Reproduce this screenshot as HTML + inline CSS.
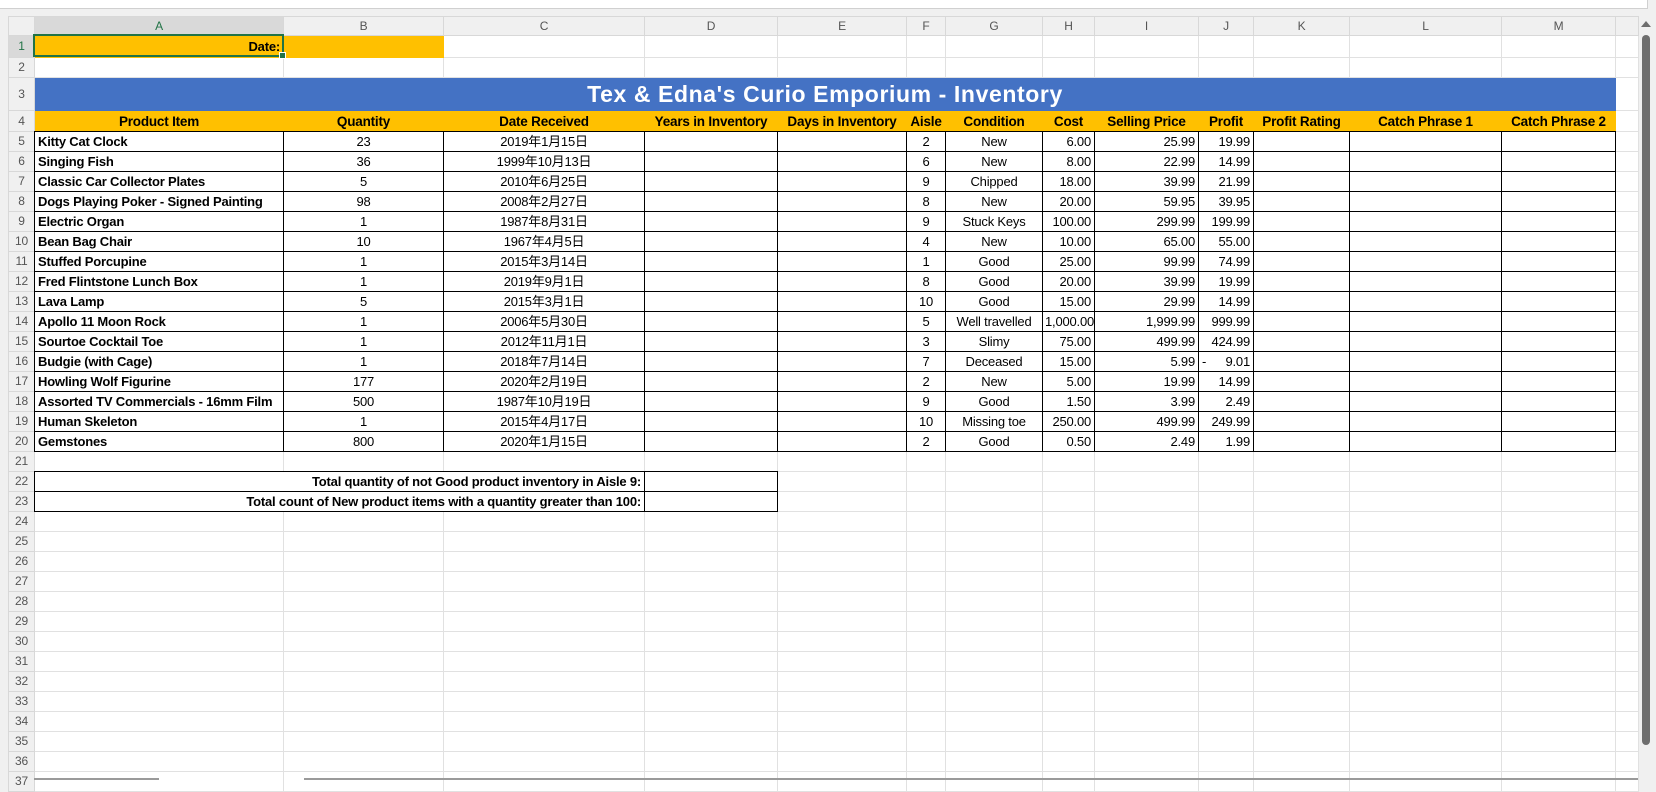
<!DOCTYPE html>
<html><head><meta charset="utf-8"><style>
body{margin:0;width:1656px;height:780px;overflow:hidden;background:#f0f0f0;font-family:"Liberation Sans","Noto Sans CJK JP",sans-serif;position:relative}
#top{position:absolute;left:0;top:0;width:1647px;height:8px;background:#fff;border-bottom:1px solid #d0d0d0;border-right:1px solid #d0d0d0}
table{position:absolute;left:8px;top:16px;border-collapse:collapse;table-layout:fixed;width:1630px;background:#fff}
td{border:1px solid #e1e1e1;padding:0 3px;height:19px;font-size:13px;white-space:nowrap;overflow:hidden;line-height:17px;letter-spacing:-0.2px;color:#000}
tr.ch td{background:#f0f0f0;color:#555;text-align:center;font-size:12px;border-color:#d8d8d8;height:18px}
td.rh{background:#f0f0f0;color:#555;text-align:center;font-size:12px;padding:0;border-color:#d8d8d8}
.k{border:1px double #000}
.c{text-align:center}.r{text-align:right}.bd{font-weight:bold}
.g{background:#ffc000}
.hd td.x{background:#ffc000;font-weight:bold;text-align:center;border-color:#ffc000;border-bottom:1px double #000;font-size:13.5px}
.t{background:#4472c4;color:#fff;font-weight:bold;font-size:23px;text-align:center;border:1px solid #4472c4;letter-spacing:0.6px}
#sel{position:absolute;left:33px;top:34px;width:247px;height:19px;border:2px solid #217346}
#hnd{position:absolute;left:279px;top:52px;width:5px;height:5px;background:#217346;border:1px solid #fff}
#vs{position:absolute;left:1642px;top:35px;width:8px;height:710px;background:#6e6e6e;border-radius:4px}
#ua{position:absolute;left:1641px;top:21px;width:0;height:0;border-left:5px solid transparent;border-right:5px solid transparent;border-bottom:6px solid #6e6e6e}
#hs1{position:absolute;left:34px;top:778px;width:125px;height:2px;background:#9a9a9a}
#hs2{position:absolute;left:304px;top:778px;width:1334px;height:2px;background:#9a9a9a}
</style></head><body>
<div id="top"></div>
<table>
<colgroup><col style="width:26px"><col style="width:249px"><col style="width:160px"><col style="width:201px"><col style="width:133px"><col style="width:129px"><col style="width:39px"><col style="width:97px"><col style="width:52px"><col style="width:104px"><col style="width:55px"><col style="width:96px"><col style="width:152px"><col style="width:114px"><col style="width:23px"></colgroup>
<tr class="ch"><td></td><td style="background:#d9d9d9;color:#217346">A</td><td>B</td><td>C</td><td>D</td><td>E</td><td>F</td><td>G</td><td>H</td><td>I</td><td>J</td><td>K</td><td>L</td><td>M</td><td></td></tr>
<tr style="height:22px"><td class="rh" style="background:#d9d9d9;color:#217346">1</td><td class="g r bd" style="border-color:#ffc000">Date:</td><td class="g" style="border-color:#ffc000"></td><td></td><td></td><td></td><td></td><td></td><td></td><td></td><td></td><td></td><td></td><td></td><td></td></tr>
<tr><td class="rh">2</td><td></td><td></td><td></td><td></td><td></td><td></td><td></td><td></td><td></td><td></td><td></td><td></td><td></td><td></td></tr>
<tr style="height:33px"><td class="rh">3</td><td class="t" colspan="13">Tex &amp; Edna's Curio Emporium - Inventory</td><td></td></tr>
<tr class="hd" style="height:21px"><td class="rh">4</td><td class="x">Product Item</td><td class="x">Quantity</td><td class="x">Date Received</td><td class="x">Years in Inventory</td><td class="x">Days in Inventory</td><td class="x">Aisle</td><td class="x">Condition</td><td class="x r">Cost</td><td class="x">Selling Price</td><td class="x">Profit</td><td class="x">Profit Rating</td><td class="x">Catch Phrase 1</td><td class="x">Catch Phrase 2</td><td></td></tr>
<tr><td class="rh">5</td><td class="k bd">Kitty Cat Clock</td><td class="k c">23</td><td class="k c">2019年1月15日</td><td class="k"></td><td class="k"></td><td class="k c">2</td><td class="k c">New</td><td class="k r">6.00</td><td class="k r">25.99</td><td class="k r">19.99</td><td class="k"></td><td class="k"></td><td class="k"></td><td></td></tr>
<tr><td class="rh">6</td><td class="k bd">Singing Fish</td><td class="k c">36</td><td class="k c">1999年10月13日</td><td class="k"></td><td class="k"></td><td class="k c">6</td><td class="k c">New</td><td class="k r">8.00</td><td class="k r">22.99</td><td class="k r">14.99</td><td class="k"></td><td class="k"></td><td class="k"></td><td></td></tr>
<tr><td class="rh">7</td><td class="k bd">Classic Car Collector Plates</td><td class="k c">5</td><td class="k c">2010年6月25日</td><td class="k"></td><td class="k"></td><td class="k c">9</td><td class="k c">Chipped</td><td class="k r">18.00</td><td class="k r">39.99</td><td class="k r">21.99</td><td class="k"></td><td class="k"></td><td class="k"></td><td></td></tr>
<tr><td class="rh">8</td><td class="k bd">Dogs Playing Poker - Signed Painting</td><td class="k c">98</td><td class="k c">2008年2月27日</td><td class="k"></td><td class="k"></td><td class="k c">8</td><td class="k c">New</td><td class="k r">20.00</td><td class="k r">59.95</td><td class="k r">39.95</td><td class="k"></td><td class="k"></td><td class="k"></td><td></td></tr>
<tr><td class="rh">9</td><td class="k bd">Electric Organ</td><td class="k c">1</td><td class="k c">1987年8月31日</td><td class="k"></td><td class="k"></td><td class="k c">9</td><td class="k c">Stuck Keys</td><td class="k r">100.00</td><td class="k r">299.99</td><td class="k r">199.99</td><td class="k"></td><td class="k"></td><td class="k"></td><td></td></tr>
<tr><td class="rh">10</td><td class="k bd">Bean Bag Chair</td><td class="k c">10</td><td class="k c">1967年4月5日</td><td class="k"></td><td class="k"></td><td class="k c">4</td><td class="k c">New</td><td class="k r">10.00</td><td class="k r">65.00</td><td class="k r">55.00</td><td class="k"></td><td class="k"></td><td class="k"></td><td></td></tr>
<tr><td class="rh">11</td><td class="k bd">Stuffed Porcupine</td><td class="k c">1</td><td class="k c">2015年3月14日</td><td class="k"></td><td class="k"></td><td class="k c">1</td><td class="k c">Good</td><td class="k r">25.00</td><td class="k r">99.99</td><td class="k r">74.99</td><td class="k"></td><td class="k"></td><td class="k"></td><td></td></tr>
<tr><td class="rh">12</td><td class="k bd">Fred Flintstone Lunch Box</td><td class="k c">1</td><td class="k c">2019年9月1日</td><td class="k"></td><td class="k"></td><td class="k c">8</td><td class="k c">Good</td><td class="k r">20.00</td><td class="k r">39.99</td><td class="k r">19.99</td><td class="k"></td><td class="k"></td><td class="k"></td><td></td></tr>
<tr><td class="rh">13</td><td class="k bd">Lava Lamp</td><td class="k c">5</td><td class="k c">2015年3月1日</td><td class="k"></td><td class="k"></td><td class="k c">10</td><td class="k c">Good</td><td class="k r">15.00</td><td class="k r">29.99</td><td class="k r">14.99</td><td class="k"></td><td class="k"></td><td class="k"></td><td></td></tr>
<tr><td class="rh">14</td><td class="k bd">Apollo 11 Moon Rock</td><td class="k c">1</td><td class="k c">2006年5月30日</td><td class="k"></td><td class="k"></td><td class="k c">5</td><td class="k c" style="padding:0">Well travelled</td><td class="k r" style="padding:0 2px">1,000.00</td><td class="k r">1,999.99</td><td class="k r">999.99</td><td class="k"></td><td class="k"></td><td class="k"></td><td></td></tr>
<tr><td class="rh">15</td><td class="k bd">Sourtoe Cocktail Toe</td><td class="k c">1</td><td class="k c">2012年11月1日</td><td class="k"></td><td class="k"></td><td class="k c">3</td><td class="k c">Slimy</td><td class="k r">75.00</td><td class="k r">499.99</td><td class="k r">424.99</td><td class="k"></td><td class="k"></td><td class="k"></td><td></td></tr>
<tr><td class="rh">16</td><td class="k bd">Budgie (with Cage)</td><td class="k c">1</td><td class="k c">2018年7月14日</td><td class="k"></td><td class="k"></td><td class="k c">7</td><td class="k c">Deceased</td><td class="k r">15.00</td><td class="k r">5.99</td><td class="k r"><span style="float:left">-</span>9.01</td><td class="k"></td><td class="k"></td><td class="k"></td><td></td></tr>
<tr><td class="rh">17</td><td class="k bd">Howling Wolf Figurine</td><td class="k c">177</td><td class="k c">2020年2月19日</td><td class="k"></td><td class="k"></td><td class="k c">2</td><td class="k c">New</td><td class="k r">5.00</td><td class="k r">19.99</td><td class="k r">14.99</td><td class="k"></td><td class="k"></td><td class="k"></td><td></td></tr>
<tr><td class="rh">18</td><td class="k bd">Assorted TV Commercials - 16mm Film</td><td class="k c">500</td><td class="k c">1987年10月19日</td><td class="k"></td><td class="k"></td><td class="k c">9</td><td class="k c">Good</td><td class="k r">1.50</td><td class="k r">3.99</td><td class="k r">2.49</td><td class="k"></td><td class="k"></td><td class="k"></td><td></td></tr>
<tr><td class="rh">19</td><td class="k bd">Human Skeleton</td><td class="k c">1</td><td class="k c">2015年4月17日</td><td class="k"></td><td class="k"></td><td class="k c">10</td><td class="k c">Missing toe</td><td class="k r">250.00</td><td class="k r">499.99</td><td class="k r">249.99</td><td class="k"></td><td class="k"></td><td class="k"></td><td></td></tr>
<tr><td class="rh">20</td><td class="k bd">Gemstones</td><td class="k c">800</td><td class="k c">2020年1月15日</td><td class="k"></td><td class="k"></td><td class="k c">2</td><td class="k c">Good</td><td class="k r">0.50</td><td class="k r">2.49</td><td class="k r">1.99</td><td class="k"></td><td class="k"></td><td class="k"></td><td></td></tr>
<tr><td class="rh">21</td><td></td><td></td><td></td><td></td><td></td><td></td><td></td><td></td><td></td><td></td><td></td><td></td><td></td><td></td></tr>
<tr><td class="rh">22</td><td class="k r bd" colspan="3">Total quantity of not Good product inventory in Aisle 9:</td><td class="k"></td><td></td><td></td><td></td><td></td><td></td><td></td><td></td><td></td><td></td><td></td></tr>
<tr><td class="rh">23</td><td class="k r bd" colspan="3">Total count of New product items with a quantity greater than 100:</td><td class="k"></td><td></td><td></td><td></td><td></td><td></td><td></td><td></td><td></td><td></td><td></td></tr>
<tr><td class="rh">24</td><td></td><td></td><td></td><td></td><td></td><td></td><td></td><td></td><td></td><td></td><td></td><td></td><td></td><td></td></tr>
<tr><td class="rh">25</td><td></td><td></td><td></td><td></td><td></td><td></td><td></td><td></td><td></td><td></td><td></td><td></td><td></td><td></td></tr>
<tr><td class="rh">26</td><td></td><td></td><td></td><td></td><td></td><td></td><td></td><td></td><td></td><td></td><td></td><td></td><td></td><td></td></tr>
<tr><td class="rh">27</td><td></td><td></td><td></td><td></td><td></td><td></td><td></td><td></td><td></td><td></td><td></td><td></td><td></td><td></td></tr>
<tr><td class="rh">28</td><td></td><td></td><td></td><td></td><td></td><td></td><td></td><td></td><td></td><td></td><td></td><td></td><td></td><td></td></tr>
<tr><td class="rh">29</td><td></td><td></td><td></td><td></td><td></td><td></td><td></td><td></td><td></td><td></td><td></td><td></td><td></td><td></td></tr>
<tr><td class="rh">30</td><td></td><td></td><td></td><td></td><td></td><td></td><td></td><td></td><td></td><td></td><td></td><td></td><td></td><td></td></tr>
<tr><td class="rh">31</td><td></td><td></td><td></td><td></td><td></td><td></td><td></td><td></td><td></td><td></td><td></td><td></td><td></td><td></td></tr>
<tr><td class="rh">32</td><td></td><td></td><td></td><td></td><td></td><td></td><td></td><td></td><td></td><td></td><td></td><td></td><td></td><td></td></tr>
<tr><td class="rh">33</td><td></td><td></td><td></td><td></td><td></td><td></td><td></td><td></td><td></td><td></td><td></td><td></td><td></td><td></td></tr>
<tr><td class="rh">34</td><td></td><td></td><td></td><td></td><td></td><td></td><td></td><td></td><td></td><td></td><td></td><td></td><td></td><td></td></tr>
<tr><td class="rh">35</td><td></td><td></td><td></td><td></td><td></td><td></td><td></td><td></td><td></td><td></td><td></td><td></td><td></td><td></td></tr>
<tr><td class="rh">36</td><td></td><td></td><td></td><td></td><td></td><td></td><td></td><td></td><td></td><td></td><td></td><td></td><td></td><td></td></tr>
<tr><td class="rh">37</td><td></td><td></td><td></td><td></td><td></td><td></td><td></td><td></td><td></td><td></td><td></td><td></td><td></td><td></td></tr>
</table>
<div id="sel"></div><div id="hnd"></div>
<div id="ua"></div><div id="vs"></div>
<div id="hs1"></div><div id="hs2"></div>
</body></html>
